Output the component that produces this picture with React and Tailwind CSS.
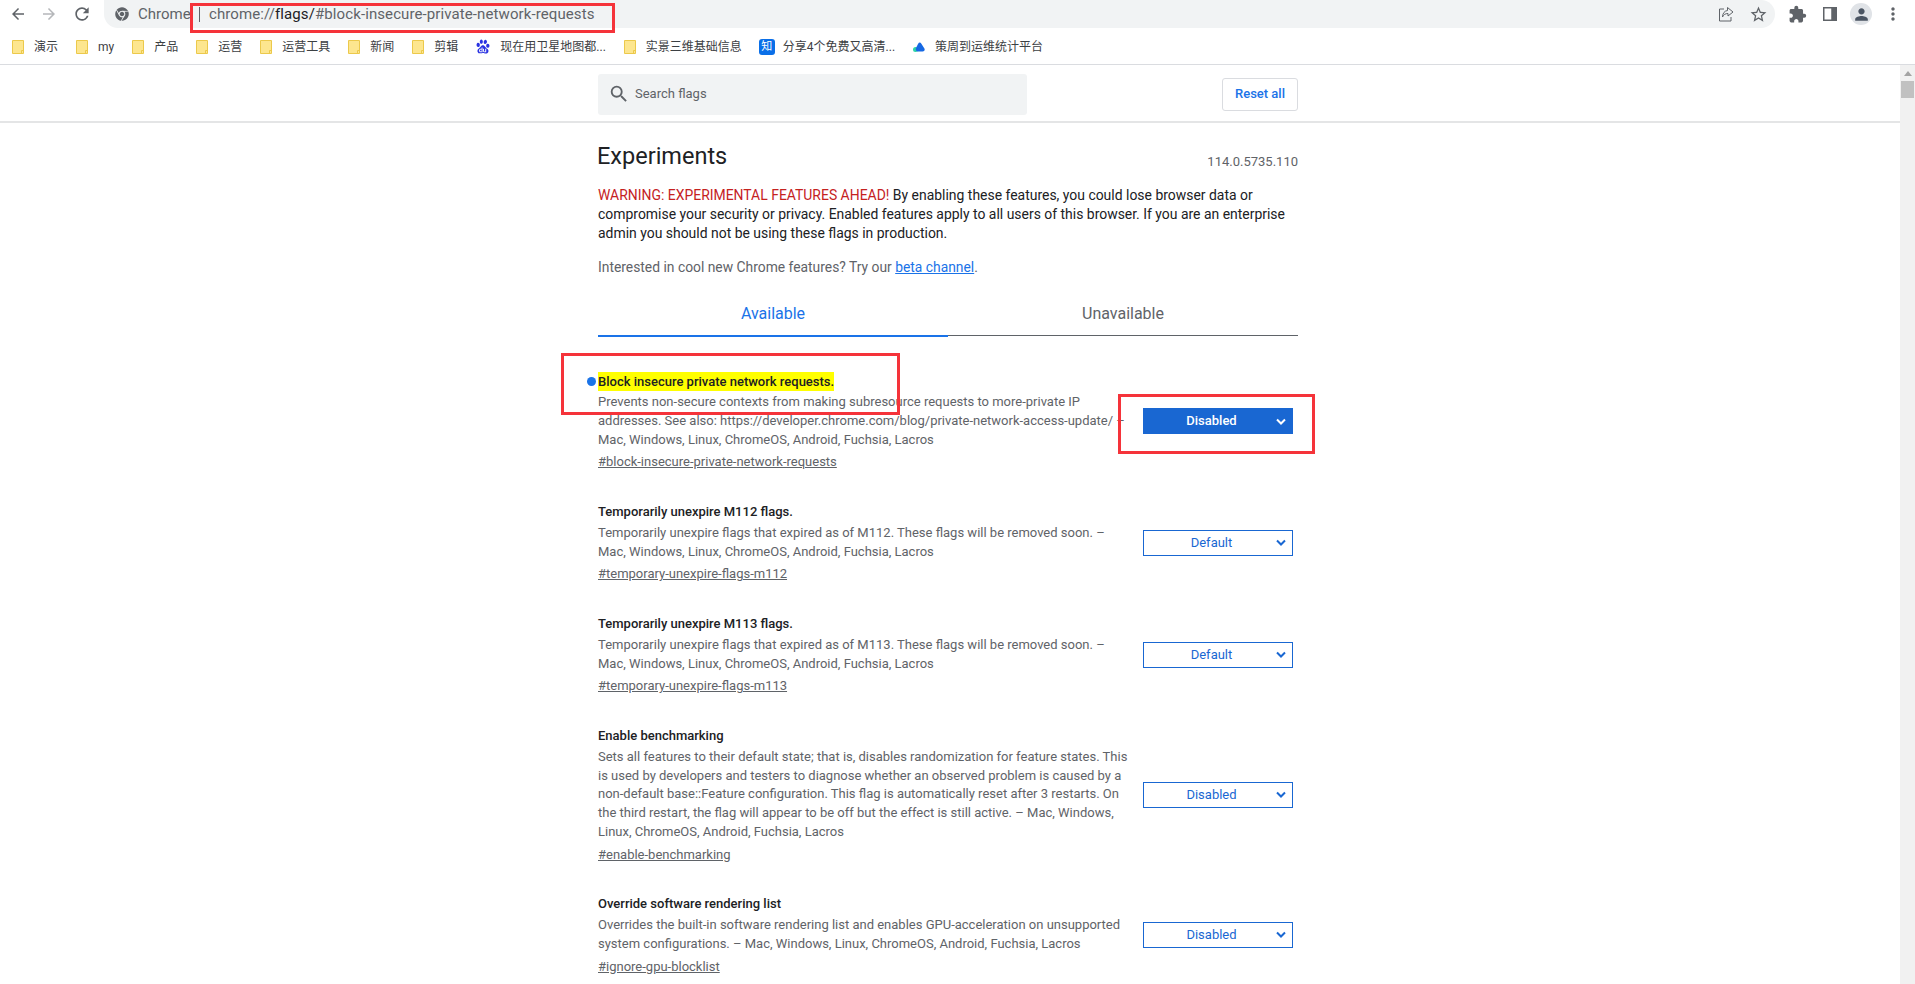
import React from 'react';
import { MdArrowBack, MdArrowForward, MdRefresh, MdExtension, MdMoreVert, MdPerson, MdSearch, MdOutlineStarBorder } from 'react-icons/md';
import { FaChrome } from 'react-icons/fa';
import { SiBaidu } from 'react-icons/si';

const Folder = () => (
  <svg width="12" height="14" viewBox="0 0 12 14" className="shrink-0">
    <path d="M0.5 0.5H11.5V13.5H0.5Z" fill="#fde68f" stroke="#ecc94b" />
    <path d="M9.5 13V10.5H11.5" fill="none" stroke="#ecc94b" />
  </svg>
);

const Zhihu = () => (
  <span className="w-4 h-4 -ml-px -mr-[2px] rounded-[3px] bg-[#0a6fe8] text-white text-[11px] leading-4 text-center shrink-0">知</span>
);

const Cloud = () => (
  <svg width="12" height="10" viewBox="0 0 12 10" className="shrink-0">
    <circle cx="2.5" cy="7.5" r="2.5" fill="#2dd4a7" />
    <path d="M3 6L5 2C6 .2 7.4 .2 8.2 1.6L11.4 6.5C12.2 8 11.2 9.6 9.6 9.6H5.5C3.4 9.6 2.2 7.8 3 6Z" fill="#1668e3" />
  </svg>
);

const Chevron = () => (
  <svg width="10" height="7" viewBox="0 0 10 7" fill="none" stroke="currentColor" strokeWidth="2" className="mr-[6px] shrink-0">
    <path d="M1 1.5L5 5.5L9 1.5" />
  </svg>
);

const bookmarks = [
  ['folder', '演示'],
  ['folder', 'my'],
  ['folder', '产品'],
  ['folder', '运营'],
  ['folder', '运营工具'],
  ['folder', '新闻'],
  ['folder', '剪辑'],
  ['baidu', '现在用卫星地图都...'],
  ['folder', '实景三维基础信息'],
  ['zhihu', '分享4个免费又高清...'],
  ['cloud', '策周到运维统计平台'],
];

const BookmarkIcon = ({ type }) => {
  if (type === 'baidu') return <SiBaidu className="text-[#2932e1] w-[14px] h-[15px] shrink-0" />;
  if (type === 'zhihu') return <Zhihu />;
  if (type === 'cloud') return <Cloud />;
  return <Folder />;
};

const FlagSelect = ({ value, active }) => (
  <div
    className={`w-[150px] h-[26px] shrink-0 mr-[5px] flex items-center border border-[#1967d2] text-[13px] ${
      active ? 'bg-[#1967d2] text-white font-medium' : 'bg-white text-[#1967d2]'
    }`}
  >
    <span className="flex-1 text-center pl-[3px]">{value}</span>
    <Chevron />
  </div>
);

const flags = [
  {
    title: 'Block insecure private network requests.',
    lines: [
      'Prevents non-secure contexts from making subresource requests to more-private IP',
      'addresses. See also: https://developer.chrome.com/blog/private-network-access-update/ –',
      'Mac, Windows, Linux, ChromeOS, Android, Fuchsia, Lacros',
    ],
    link: '#block-insecure-private-network-requests',
    value: 'Disabled',
    active: true,
  },
  {
    title: 'Temporarily unexpire M112 flags.',
    lines: [
      'Temporarily unexpire flags that expired as of M112. These flags will be removed soon. –',
      'Mac, Windows, Linux, ChromeOS, Android, Fuchsia, Lacros',
    ],
    link: '#temporary-unexpire-flags-m112',
    value: 'Default',
  },
  {
    title: 'Temporarily unexpire M113 flags.',
    lines: [
      'Temporarily unexpire flags that expired as of M113. These flags will be removed soon. –',
      'Mac, Windows, Linux, ChromeOS, Android, Fuchsia, Lacros',
    ],
    link: '#temporary-unexpire-flags-m113',
    value: 'Default',
  },
  {
    title: 'Enable benchmarking',
    lines: [
      'Sets all features to their default state; that is, disables randomization for feature states. This',
      'is used by developers and testers to diagnose whether an observed problem is caused by a',
      'non-default base::Feature configuration. This flag is automatically reset after 3 restarts. On',
      'the third restart, the flag will appear to be off but the effect is still active. – Mac, Windows,',
      'Linux, ChromeOS, Android, Fuchsia, Lacros',
    ],
    link: '#enable-benchmarking',
    value: 'Disabled',
  },
  {
    title: 'Override software rendering list',
    lines: [
      'Overrides the built-in software rendering list and enables GPU-acceleration on unsupported',
      'system configurations. – Mac, Windows, Linux, ChromeOS, Android, Fuchsia, Lacros',
    ],
    link: '#ignore-gpu-blocklist',
    value: 'Disabled',
  },
];

const FlagItem = ({ flag }) => (
  <div className="flex items-center justify-between mb-[30.5px]">
    <div className="w-[540px]">
      <div className="h-[20px] leading-[20px] font-medium text-[#202124] flex items-center">
        {flag.active ? (
          <span className="relative bg-[#ffff00] h-[19px] leading-[19px]">
            <span className="absolute left-[-11px] top-[5px] w-[9px] h-[9px] rounded-full bg-[#1a73e8]" />
            {flag.title}
          </span>
        ) : (
          flag.title
        )}
      </div>
      <div className="mt-[2px] text-[#5f6368] leading-[18.75px]">
        {flag.lines.map((line) => (
          <div key={line} className="whitespace-nowrap">{line}</div>
        ))}
      </div>
      <div className="mt-[3px] leading-[19px] text-[#5f6368] underline">{flag.link}</div>
    </div>
    <FlagSelect value={flag.value} active={flag.active} />
  </div>
);

export default function App() {
  return (
    <div className="relative w-[1915px] h-[984px] overflow-hidden bg-white font-['Roboto','Noto_Sans_CJK_SC',sans-serif] text-[13px]">
      {/* toolbar */}
      <div className="h-[28px] flex items-center">
        <div className="w-[104px] flex items-center pl-[9px] gap-[13px] text-[#5f6368]">
          <MdArrowBack className="w-[18px] h-[18px]" />
          <MdArrowForward className="w-[18px] h-[18px] text-[#b5b7ba]" />
          <MdRefresh className="w-[20px] h-[20px] ml-[1px]" />
        </div>
        <div className="w-[1671px] h-[28px] bg-[#f1f3f4] rounded-r-[14px] rounded-bl-[14px] flex items-center pl-[11px] pr-[7px] text-[15px]">
          <FaChrome className="w-[14px] h-[14px] text-[#5f6368]" />
          <span className="ml-[9px] text-[#5f6368] w-[61px] whitespace-nowrap">Chrome</span>
          <span className="w-px h-[15px] bg-[#5f6368]" />
          <span className="ml-[9px] text-[#5f6368] tracking-[0.1px]">
            chrome://<span className="text-[#202124]">flags/</span>#block-insecure-private-network-requests
          </span>
          <div className="ml-auto flex items-center gap-[15px] text-[#5f6368]">
            <svg width="16" height="16" viewBox="0 0 16 16" fill="none" stroke="#5f6368" strokeWidth="1">
              <path d="M6 3H1.5V15H13V11" />
              <path d="M9.5 1.5L15 6L10 10V7.5C7.5 7.5 5.5 8.5 4.5 11C4.5 7.5 6.5 4.8 9.5 4.5Z" />
            </svg>
            <MdOutlineStarBorder className="w-[19px] h-[19px]" />
          </div>
        </div>
        <div className="flex-1 flex items-center text-[#5f6368] pl-[13px]">
          <MdExtension className="w-[19px] h-[19px]" />
          <svg width="14" height="14" viewBox="0 0 14 14" className="ml-[16px]">
            <path d="M0 0H14V14H0ZM1.5 1.5V12.5H8.5V1.5Z" fill="#5f6368" fillRule="evenodd" />
            <rect x="8.5" y="1" width="5" height="12" fill="#5f6368" />
          </svg>
          <span className="ml-[13px] w-[22px] h-[22px] rounded-full bg-[#e0e3e7] flex items-center justify-center">
            <MdPerson className="w-[19px] h-[19px] text-[#4b5563]" />
          </span>
          <MdMoreVert className="ml-[11px] w-[20px] h-[20px]" />
        </div>
      </div>

      {/* bookmarks */}
      <div className="h-[37px] flex items-center pt-[1px] pl-[12px] gap-[18px] border-b border-[#dadce0] text-[12px] text-[#3c4043]">
        {bookmarks.map(([type, label]) => (
          <div key={label} className="flex items-center gap-[10px] whitespace-nowrap">
            <BookmarkIcon type={type} />
            <span>{label}</span>
          </div>
        ))}
      </div>

      <div className="flex h-[919px]">
        <div className="flex-1 min-w-0">
          {/* flags header */}
          <div className="h-[58px] pt-[2px] border-b-2 border-[#e4e5e6] flex justify-center pr-[4px]">
            <div className="w-[700px] flex items-center justify-between">
              <div className="w-[429px] h-[41px] bg-[#f1f3f4] rounded-[3px] flex items-center pl-[10px] gap-[5px] text-[#5f6368]">
                <MdSearch className="w-[22px] h-[22px]" />
                <span>Search flags</span>
              </div>
              <div className="w-[76px] h-[33px] border border-[#dadce0] rounded-[3px] flex items-center justify-center text-[#1a73e8] font-medium">
                Reset all
              </div>
            </div>
          </div>

          {/* content */}
          <div className="flex justify-center pr-[4px]">
            <div className="w-[700px]">
              <div className="flex items-end justify-between h-[48px] pt-[8px]">
                <h1 className="text-[23.5px] leading-[30px] text-[#202124] -ml-px">Experiments</h1>
                <span className="text-[#5f6368] leading-[19px]">114.0.5735.110</span>
              </div>
              <p className="mt-[15px] leading-[19px] text-[13.95px] text-[#202124]">
                <span className="text-[#c5221f]">WARNING: EXPERIMENTAL FEATURES AHEAD!</span> By enabling these features, you could lose browser data or compromise your security or privacy. Enabled features apply to all users of this browser. If you are an enterprise admin you should not be using these flags in production.
              </p>
              <p className="mt-[15px] leading-[19px] text-[13.85px] text-[#5f6368]">
                Interested in cool new Chrome features? Try our <span className="text-[#1a73e8] underline">beta channel</span>.
              </p>
              <div className="mt-[16px] flex h-[44px] text-[16px]">
                <div className="flex-1 flex items-center justify-center text-[#1a73e8] border-b-2 border-[#1a73e8]">Available</div>
                <div className="flex-1 flex items-center justify-center text-[#5f6368] border-b border-[#5f6368] h-[43px]">Unavailable</div>
              </div>
              <div className="mt-[34px]">
                {flags.map((flag) => (
                  <FlagItem key={flag.link} flag={flag} />
                ))}
              </div>
            </div>
          </div>
        </div>

        {/* scrollbar */}
        <div className="w-[15px] bg-[#f1f1f1] flex flex-col items-center pt-[6px]">
          <span className="w-0 h-0 border-x-[4px] border-x-transparent border-b-[5px] border-b-[#a3a3a3]" />
          <span className="mt-[5px] w-[13px] h-[17px] bg-[#c1c1c1]" />
        </div>
      </div>

      {/* red annotation boxes drawn over the screenshot */}
      <div className="absolute left-[190px] top-[3px] w-[425px] h-[30px] border-[3px] border-[#f5333a] pointer-events-none" />
      <div className="absolute left-[561px] top-[353px] w-[339px] h-[62px] border-[3px] border-[#f5333a] pointer-events-none" />
      <div className="absolute left-[1118px] top-[394px] w-[197px] h-[60px] border-[3px] border-[#f5333a] pointer-events-none" />
    </div>
  );
}
